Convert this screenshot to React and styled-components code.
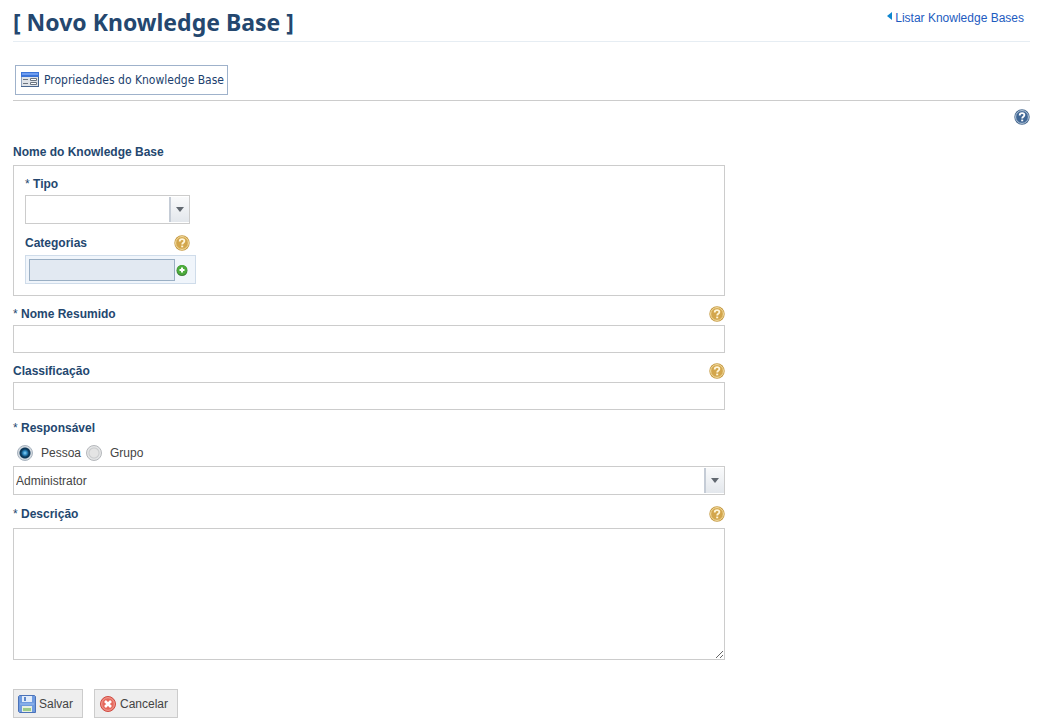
import { useState } from 'react'
import styled, { createGlobalStyle } from 'styled-components'

const colors = {
  navy: '#24476f',
  link: '#1d5bbf',
  text: '#444',
  border: '#ccc',
  blueBorder: '#9fb2cb',
}

const GlobalStyle = createGlobalStyle`
  * {
    box-sizing: border-box;
  }
  body {
    margin: 0;
    background: #fff;
    color: ${colors.text};
    font: 12px/16px "Liberation Sans", Arial, sans-serif;
  }
  svg {
    display: block;
    flex: none;
  }
`

const Page = styled.main`
  padding: 0 9px 10px 13px;
`

const Header = styled.header`
  display: flex;
  justify-content: space-between;
  align-items: flex-start;
  height: 42px;
  border-bottom: 1px solid #e6edf3;
`

const Title = styled.h1`
  margin: 0;
  padding-top: 6px;
  color: ${colors.navy};
  font: bold 23px/32px "Trebuchet MS", "Noto Sans", sans-serif;
`

const BackLink = styled.a`
  display: flex;
  gap: 3px;
  padding: 10px 6px 0 0;
  color: ${colors.link};
  text-decoration: none;

  svg {
    margin-top: 2px;
  }
`

const TabBar = styled.nav`
  display: flex;
  padding: 23px 2px 5px;
  border-bottom: 1px solid ${colors.border};
`

const Tab = styled.button`
  display: flex;
  align-items: center;
  gap: 5px;
  height: 30px;
  padding: 0 3px 0 5px;
  border: 1px solid ${colors.blueBorder};
  background: #fff;
  color: #1c3f6e;
  font: 12px/16px Tahoma, "DejaVu Sans Condensed", sans-serif;
`

const Toolbar = styled.div`
  display: flex;
  justify-content: flex-end;
  padding-top: 8px;
`

const HelpButton = styled.button`
  padding: 0;
  border: 0;
  background: none;
`

const Form = styled.form`
  width: 70%;
  padding-top: 9px;
`

const LabelRow = styled.div`
  display: flex;
  justify-content: space-between;
  align-items: center;
  height: ${props => (props.$tall ? 23 : 21)}px;
  margin-top: 8px;
  padding-bottom: 2px;
`

const labelStyle = `
  color: ${colors.navy};
  font-weight: bold;

  span {
    font-weight: normal;
  }
`

const Label = styled.label`
  ${labelStyle}
`

const GroupLabel = styled.div`
  ${labelStyle}
`

const Panel = styled.section`
  margin-top: 2px;
  padding: 0 11px 11px;
  border: 1px solid ${colors.border};
`

const Narrow = styled.div`
  width: 165px;
`

const TextInput = styled.input`
  display: block;
  width: 100%;
  height: 28px;
  padding: 0 2px;
  border: 1px solid ${colors.border};
  background: #fff;
  color: ${colors.text};
  font: inherit;
`

const TextArea = styled.textarea`
  display: block;
  width: 100%;
  height: 132px;
  margin-top: 2px;
  padding: 2px;
  border: 1px solid ${colors.border};
  color: ${colors.text};
  font: inherit;
`

const SelectBox = styled.div`
  display: grid;
  grid-template-columns: 1fr 20px;
  height: 29px;
  border: 1px solid ${colors.border};

  select {
    grid-area: 1 / 1 / 2 / 3;
    width: 100%;
    padding: 0 22px 0 2px;
    border: 0;
    border-radius: 0;
    appearance: none;
    background: #fff;
    color: ${colors.text};
    font: inherit;
  }
`

const SelectArrow = styled.span`
  grid-area: 1 / 2;
  display: flex;
  align-items: center;
  justify-content: center;
  margin: 1px 0;
  border-left: 2px solid #c5ccd6;
  background: linear-gradient(#f9fafb, #e3e7ec);
  pointer-events: none;
`

const Picker = styled.div`
  display: flex;
  align-items: center;
  width: 171px;
  height: 29px;
  padding: 0 3px;
  border: 1px solid #cfdcea;
  background: #f0f5fb;

  input {
    width: 146px;
    height: 22px;
    border: 1px solid #9aafc4;
    background: #e2e9f2;
  }
  button {
    padding: 0;
    border: 0;
    background: none;
  }
`

const Options = styled.div`
  display: flex;
  align-items: center;
  gap: 5px;
  height: 27px;
  padding-left: 4px;

  label {
    display: flex;
    align-items: center;
    gap: 8px;
  }
`

const Radio = styled.input`
  appearance: none;
  width: 16px;
  height: 16px;
  margin: 0;
  border: 1px solid #b4b7bb;
  border-radius: 50%;
  background: radial-gradient(circle, #e4e4e4 0 4px, #c9cbcd 5px, #e4e5e6 6px);

  &:checked {
    border-color: #a9b4c0;
    background: radial-gradient(circle, #8fd3f5 0, #2f8cc6 2px, #0c3759 4px, #0c3759 5px, transparent 6px), #d3d9df;
  }
`

const Actions = styled.div`
  display: flex;
  gap: 11px;
  margin-top: 29px;
`

const ActionButton = styled.button`
  display: flex;
  align-items: center;
  gap: 3px;
  height: 29px;
  padding: 0 9px 0 4px;
  border: 1px solid ${colors.border};
  background: #eee;
  color: ${colors.text};
  font: inherit;
`

const HelpIcon = ({ blue }) => (
  <svg width="16" height="16" viewBox="0 0 16 16" fill="none">
    <circle cx="8" cy="8" r="7.7" fill={blue ? '#47698f' : '#c79a42'} />
    <circle cx="8" cy="8" r="6.4" fill={blue ? '#406795' : '#d3a64c'} stroke={blue ? '#b9cadd' : '#f3dfa6'} />
    <path d="M5.7 6.4c0-1.5 1-2.3 2.4-2.3s2.3.8 2.3 2c0 1.7-2.2 1.7-2.2 3.3" stroke={blue ? '#fff' : '#fff6da'} strokeWidth="1.8" />
    <path d="M7.2 10.6h2v1.7h-2z" fill={blue ? '#fff' : '#fff6da'} />
  </svg>
)

const FormIcon = () => (
  <svg width="18" height="16" viewBox="0 0 18 16">
    <path d="M0 0h18v15H0z" fill="#8fa3bf" />
    <path d="M1 5h16v9H1z" fill="#dfe3e8" />
    <path d="M0 0h18v5H0z" fill="#3b74d8" />
    <path d="M1 1h16v2H1z" fill="#6d9cf0" />
    <path d="M2 7h5v1H2zM2 11h5v1H2z" fill="#6b7480" />
    <path d="M9.500 6.500h6v2h-6zM9.500 10.500h6v2h-6z" fill="#fff" stroke="#6b7480" />
    <path d="M17 5h1v10H0v-1h17z" fill="#48658e" />
  </svg>
)

const AddIcon = () => (
  <svg width="14" height="14" viewBox="0 0 14 14">
    <circle cx="7" cy="7.500" r="5.500" fill="#3d7f37" />
    <circle cx="7" cy="7" r="5" fill="#4cac3c" />
    <path d="M7 4.500v5M4.500 7h5" stroke="#fff" strokeWidth="2" />
  </svg>
)

const SaveIcon = () => (
  <svg width="18" height="18" viewBox="0 0 18 18">
    <path d="M1.500.5h15l1 1v16H1.500l-1-1v-15z" fill="#6f9be0" stroke="#4a72b8" />
    <path d="M4 1h10v6H4z" fill="#e2ecfa" />
    <path d="M6 2h2v4H6z" fill="#5d86c8" />
    <path d="M2 8h14v2H2z" fill="#86aee9" />
    <path d="M4 11h10v6H4z" fill="#e8f0e0" />
    <path d="M5 13h8v3H5z" fill="#9ccb8a" />
  </svg>
)

const CancelIcon = () => (
  <svg width="18" height="16" viewBox="-1 0 18 16">
    <circle cx="8" cy="8" r="7.500" fill="#e5695c" stroke="#d04b42" />
    <circle cx="8" cy="8" r="6.300" fill="none" stroke="#f3a198" />
    <path d="M5 5l6 6M11 5l-6 6" stroke="#fff" strokeWidth="2.600" />
  </svg>
)

const Select = ({ id, children }) => (
  <SelectBox>
    <select id={id}>{children}</select>
    <SelectArrow>
      <svg width="8" height="5" viewBox="0 0 8 5"><path d="M0 0h8L4 5z" fill="#616870" /></svg>
    </SelectArrow>
  </SelectBox>
)

const FieldLabel = ({ id, text, required, help, tall }) => (
  <LabelRow $tall={tall}>
    <Label htmlFor={id}>{required && <span>* </span>}{text}</Label>
    {help && <HelpButton type="button"><HelpIcon /></HelpButton>}
  </LabelRow>
)

const owners = ['Pessoa', 'Grupo']

export default function App() {
  const [owner, setOwner] = useState('Pessoa')

  return (
    <>
      <GlobalStyle />
      <Page>
        <Header>
          <Title>[ Novo Knowledge Base ]</Title>
          <BackLink href="#">
            <svg width="5" height="8" viewBox="0 0 5 8"><path d="M5 0v8L0 4z" fill="#0e86cf" /></svg>
            Listar Knowledge Bases
          </BackLink>
        </Header>

        <TabBar>
          <Tab type="button"><FormIcon />Propriedades do Knowledge Base</Tab>
        </TabBar>

        <Toolbar>
          <HelpButton type="button"><HelpIcon blue /></HelpButton>
        </Toolbar>

        <Form onSubmit={e => e.preventDefault()}>
          <LabelRow>
            <GroupLabel>Nome do Knowledge Base</GroupLabel>
          </LabelRow>
          <Panel>
            <Narrow>
              <FieldLabel id="type" text="Tipo" required />
              <Select id="type"><option></option></Select>
              <FieldLabel id="categories" text="Categorias" help tall />
            </Narrow>
            <Picker>
              <input id="categories" type="text" readOnly />
              <button type="button"><AddIcon /></button>
            </Picker>
          </Panel>

          <FieldLabel id="shortName" text="Nome Resumido" required help />
          <TextInput id="shortName" type="text" />

          <FieldLabel id="classification" text="Classificação" help />
          <TextInput id="classification" type="text" />

          <FieldLabel id="owner" text="Responsável" required />
          <Options>
            {owners.map(name => (
              <label key={name}>
                <Radio type="radio" name="ownerType" checked={owner === name} onChange={() => setOwner(name)} />
                {name}
              </label>
            ))}
          </Options>
          <Select id="owner"><option>Administrator</option></Select>

          <FieldLabel id="description" text="Descrição" required help tall />
          <TextArea id="description" />

          <Actions>
            <ActionButton type="submit"><SaveIcon />Salvar</ActionButton>
            <ActionButton type="button"><CancelIcon />Cancelar</ActionButton>
          </Actions>
        </Form>
      </Page>
    </>
  )
}
